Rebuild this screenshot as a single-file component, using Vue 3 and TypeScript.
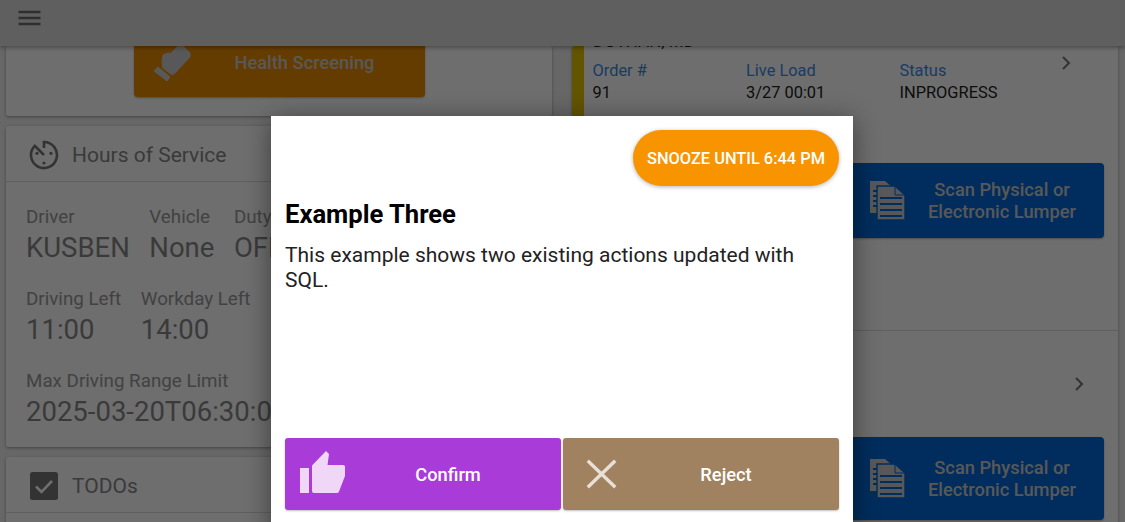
<script setup lang="ts">
const hosTop = [
  { label: 'Driver', value: 'KUSBEN' },
  { label: 'Vehicle', value: 'None' },
  { label: 'Duty Status', value: 'OFF' },
]
const hosMid = [
  { label: 'Driving Left', value: '11:00' },
  { label: 'Workday Left', value: '14:00' },
]
const order = [
  { label: 'Order #', value: '91' },
  { label: 'Live Load', value: '3/27 00:01' },
  { label: 'Status', value: 'INPROGRESS' },
]
</script>

<template>
  <div class="page">
    <header class="topbar">
      <svg class="menu" width="24" height="16" viewBox="0 0 24 16"><path d="M.5 2h22M.5 8h22M.5 14h22" stroke="#6e6e6e" stroke-width="2.4" /></svg>
    </header>
    <main class="columns">
      <section class="col">
        <div class="card screening">
          <button class="btn orange">
            <svg class="health" width="60" height="50" viewBox="0 0 60 50"><path d="M22 22L23 15L28 13L30 14L37 7L43 6L50 13L50 17L35 33L32 35L23 28Z" fill="#ccc" stroke="#ccc" stroke-linejoin="round" /><path d="M14 31L18 27L30 37L27 41Z" fill="#ccc" stroke="#ccc" stroke-linejoin="round" /></svg>
            <span>Health Screening</span>
          </button>
        </div>
        <div class="card hos">
          <div class="card-head">
            <svg width="30" height="30" viewBox="0 0 30 30" fill="none" stroke="#777" stroke-width="2.6"><path d="M15 8V2A13 13 0 1 1 5.8 5.8L15 15" /><g fill="#777" stroke="none"><circle cx="22" cy="13.3" r="1.6"/><circle cx="15" cy="23" r="1.6"/><circle cx="8" cy="13.3" r="1.6"/></g></svg>
            <span>Hours of Service</span>
          </div>
          <div class="hos-body">
            <div class="row">
              <div v-for="f in hosTop" :key="f.label" class="field"><div class="lab">{{ f.label }}</div><div class="val">{{ f.value }}</div></div>
            </div>
            <div class="row">
              <div v-for="f in hosMid" :key="f.label" class="field"><div class="lab">{{ f.label }}</div><div class="val">{{ f.value }}</div></div>
            </div>
            <div class="row">
              <div class="field"><div class="lab">Max Driving Range Limit</div><div class="val">2025-03-20T06:30:00</div></div>
            </div>
          </div>
        </div>
        <div class="card todos">
          <div class="card-head">
            <svg width="30" height="30" viewBox="0 0 30 30"><rect x="1" y="1" width="28" height="28" rx="2.5" fill="#777"/><path d="M7 15.5l5.5 5.5L23 10" fill="none" stroke="#fff" stroke-width="2.6"/></svg>
            <span>TODOs</span>
          </div>
        </div>
      </section>
      <section class="col right">
        <div class="card orders">
          <div class="load">
            <div class="load-title">DOTHAN, MD</div>
            <div class="load-grid">
              <div v-for="f in order" :key="f.label" class="o-field"><div class="o-lab">{{ f.label }}</div><div class="o-val">{{ f.value }}</div></div>
              <svg class="chev c1" width="12" height="16" viewBox="0 0 12 16" fill="none" stroke="#777" stroke-width="2"><path d="M2 2l6 6-6 6"/></svg>
            </div>
          </div>
          <div class="lumper-wrap first">
            <button class="btn blue">
              <svg class="doc" width="36" height="39" viewBox="0 0 36 39"><path d="M0 0h15l7 6v26H0z" fill="#ccc"/><path d="M3 10h4M3 15h4M3 20h4M3 25h4" stroke="#0068d8" stroke-width="1.8"/><path d="M7 5h18l10 9v25H7z" fill="#ccc" stroke="#0068d8" stroke-width="1.4"/><path d="M25 5v9h10" fill="none" stroke="#0068d8" stroke-width="1"/><path d="M10 17h22M10 23h22M10 29h22M10 35h22" stroke="#0068d8" stroke-width="2"/></svg>
              <span>Scan Physical or<br />Electronic Lumper</span>
            </button>
          </div>
          <div class="second">
            <svg class="chev c2" width="12" height="16" viewBox="0 0 12 16" fill="none" stroke="#777" stroke-width="2"><path d="M2 2l6 6-6 6"/></svg>
          </div>
          <div class="lumper-wrap">
            <button class="btn blue tall">
              <svg class="doc" width="36" height="39" viewBox="0 0 36 39"><path d="M0 0h15l7 6v26H0z" fill="#ccc"/><path d="M3 10h4M3 15h4M3 20h4M3 25h4" stroke="#0068d8" stroke-width="1.8"/><path d="M7 5h18l10 9v25H7z" fill="#ccc" stroke="#0068d8" stroke-width="1.4"/><path d="M25 5v9h10" fill="none" stroke="#0068d8" stroke-width="1"/><path d="M10 17h22M10 23h22M10 29h22M10 35h22" stroke="#0068d8" stroke-width="2"/></svg>
              <span>Scan Physical or<br />Electronic Lumper</span>
            </button>
          </div>
        </div>
      </section>
    </main>

    <div class="overlay">
      <div class="modal">
        <div class="snooze-row"><button class="snooze">SNOOZE UNTIL 6:44 PM</button></div>
        <h2>Example Three</h2>
        <p>This example shows two existing actions updated with SQL.</p>
        <div class="actions">
          <button class="act confirm">
            <svg class="thumb" width="48" height="42" viewBox="0 0 48 42"><path d="M1 17h9v25H1zM13 40V14.5L27 0l3 3-1.5 11H44a2 2 0 0 1 2 2.5V25l-6 15.5a2 2 0 0 1-2 1.5H15a2 2 0 0 1-2-2z" fill="#f1d7f7"/></svg>
            <span>Confirm</span>
          </button>
          <button class="act reject">
            <svg width="48" height="46" viewBox="0 0 48 46"><path d="M12 11L37 35M37 11L12 35" stroke="#e8e0d5" stroke-width="3.4" stroke-linecap="square"/></svg>
            <span>Reject</span>
          </button>
        </div>
      </div>
    </div>
  </div>
</template>

<style>
html, body { margin: 0; padding: 0; }
</style>

<style scoped>
.page {
  position: relative;
  width: 1125px;
  height: 522px;
  overflow: hidden;
  background: #eeeeee;
  font-family: Roboto, "Liberation Sans", sans-serif;
}
.topbar {
  height: 46px;
  box-sizing: border-box;
  background: #dcdcdc;
  box-shadow: 0 2px 4px rgba(0,0,0,.3);
  padding: 10px 0 0 18px;
  position: relative;
  z-index: 1;
}
.menu { display: block; }
.columns {
  display: grid;
  grid-template-columns: 546px 546px;
  column-gap: 20px;
  padding-left: 6px;
}
.col { display: flex; flex-direction: column; gap: 10px; }
.card {
  background: #ffffff;
  border-radius: 2px;
  box-shadow: 0 1px 3px rgba(0,0,0,.35);
  overflow: hidden;
}
.btn {
  display: flex;
  align-items: center;
  border: 0;
  border-radius: 4px;
  color: #ccc;
  font: 500 18.3px/22px Roboto, sans-serif;
  padding: 0;
  box-shadow: 0 1px 2px rgba(0,0,0,.3);
}
.screening {
  height: 70px;
  display: flex;
  justify-content: center;
  align-items: flex-end;
}
.orange {
  width: 291px;
  height: 70px;
  margin-bottom: 19px;
  background: #ea8c00;
  flex: none;
}
.health { margin: 6px 0 0 6px; flex: none; }
.orange span { margin-left: 35px; padding-top: 1px; }
.hos { height: 321px; }
.card-head {
  height: 56px;
  box-sizing: border-box;
  border-bottom: 1px solid #dddddd;
  display: flex;
  align-items: center;
  gap: 13px;
  padding: 2px 0 0 23px;
  font-size: 21px;
  color: #888;
}
.hos-body { padding: 23px 20px 0; }
.row { display: flex; gap: 19.5px; margin-bottom: 20px; }
.lab { font-size: 18.8px; line-height: 24px; color: #999; white-space: nowrap; }
.val { font-size: 27.5px; line-height: 38px; white-space: nowrap; color: #888; }
.todos { height: 80px; }
.orders { height: 480px; }
.load {
  height: 70px;
  border-left: 12px solid #e6c200;
  position: relative;
  padding-left: 9px;
}
.load-title {
  position: absolute;
  top: -17px;
  left: 9px;
  font-size: 17px;
  line-height: 24px;
  color: #222;
}
.load-grid {
  padding-top: 14px;
  display: grid;
  grid-template-columns: 153.5px 153.5px 1fr;
  position: relative;
  margin-left: -.5px;
}
.o-lab { color: #3d8ae8; font-size: 16.4px; line-height: 22px; }
.o-val { color: #222; font-size: 16.4px; line-height: 22px; }
.chev { position: absolute; }
.c1 { right: 45px; top: 9px; }
.lumper-wrap { display: flex; justify-content: flex-end; padding-right: 14px; }
.lumper-wrap.first { padding-top: 47px; height: 167px; }
.blue {
  width: 270px;
  height: 75px;
  background: #0068d8;
  flex: none;
}
.blue.tall { height: 83px; }
.doc { margin-left: 36px; flex: none; }
.blue span { flex: 1; text-align: center; padding-top: 1px; margin-right: 6px; }
.second {
  height: 107px;
  box-sizing: border-box;
  border-top: 1px solid #dddddd;
  position: relative;
}
.c2 { right: 32px; top: 45px; }
.overlay {
  position: absolute;
  inset: 0;
  background: rgba(0,0,0,.57);
  z-index: 2;
}
.modal {
  position: absolute;
  left: 271px;
  top: 116px;
  width: 582px;
  height: 420px;
  box-sizing: border-box;
  padding: 14px;
  background: #fff;
  box-shadow: 0 4px 24px rgba(0,0,0,.45);
  color: #111;
}
.snooze-row { display: flex; justify-content: flex-end; }
.snooze {
  width: 206px;
  height: 56px;
  border: 0;
  border-radius: 28px;
  background: #f79400;
  color: #fff;
  font: 500 16.4px Roboto, sans-serif;
  padding: 0;
  box-shadow: 0 1px 4px rgba(0,0,0,.3);
}
h2 { margin: 13px 0 0; font: 700 25.6px/30px Roboto, sans-serif; color: #000; }
p { margin: 14px 0 0; font: 400 21px/25px Roboto, sans-serif; color: #222; }
.actions {
  position: absolute;
  left: 14px;
  top: 322px;
  display: flex;
  gap: 2px;
}
.act {
  width: 276px;
  height: 72px;
  border: 0;
  border-radius: 3px;
  padding: 0 0 0 14px;
  display: flex;
  align-items: center;
  color: #fff;
  font: 500 18.3px Roboto, sans-serif;
  box-shadow: 0 1px 2px rgba(0,0,0,.25);
}
.act svg { flex: none; }
.thumb { margin-bottom: 4px; }
.act span { flex: 1; text-align: center; padding-right: 12px; }
.confirm { background: #a93bd8; }
.reject { background: #a08260; }
</style>
